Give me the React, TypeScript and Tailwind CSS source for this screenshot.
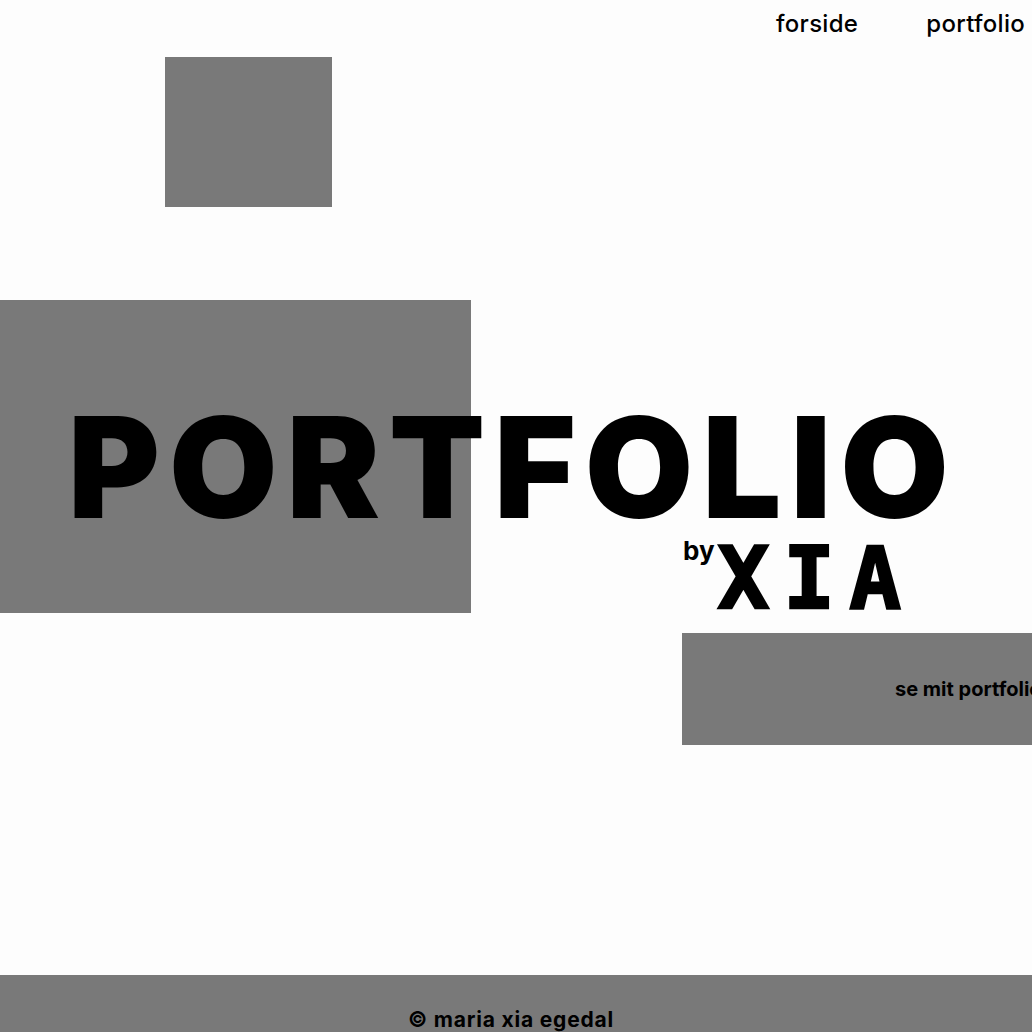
import React from "react";

export default function App() {
  return (
    <div className="w-[1032px] min-h-[1032px] overflow-hidden bg-[#fdfdfd] text-black font-['Inter',sans-serif]">
      {/* Nav */}
      <nav className="flex flex-row gap-[68px] pl-[776px] pt-[6px] text-[24px] font-medium tracking-[0.3px] whitespace-nowrap">
        <span>forside</span>
        <span>portfolio</span>
      </nav>

      {/* Small square */}
      <div className="ml-[165px] mt-[15px] w-[167px] h-[150px] bg-[#797979]" />

      {/* Hero */}
      <div className="relative mt-[93px] h-[313px]">
        <div className="w-[471px] h-[313px] bg-[#797979]" />
        <h1 className="absolute left-[68px] top-[97px] text-[140px] leading-none font-black tracking-[9px] whitespace-nowrap">
          PORTFOLIO
        </h1>
      </div>

      {/* by XIA */}
      <div className="flex flex-row items-start ml-[683px] -mt-[78px]">
        <span className="text-[26px] font-bold -mt-[4px]">by</span>
        <span className="ml-[3px] text-[86px] leading-none font-bold tracking-[14px] font-['DejaVu_Sans_Mono',monospace] [-webkit-text-stroke:2.5px_black]">
          XIA
        </span>
      </div>

      {/* CTA */}
      <div className="ml-[682px] mt-[12px] w-[400px] h-[112px] bg-[#797979] flex items-center pl-[213px]">
        <span className="text-[20px] font-bold whitespace-nowrap">se mit portfolio</span>
      </div>

      {/* Footer */}
      <footer className="mt-[230px] h-[80px] bg-[#797979] flex justify-center pt-[29px] pr-[10px]">
        <span className="text-[21px] font-bold tracking-[0.8px]">© maria xia egedal</span>
      </footer>
    </div>
  );
}
